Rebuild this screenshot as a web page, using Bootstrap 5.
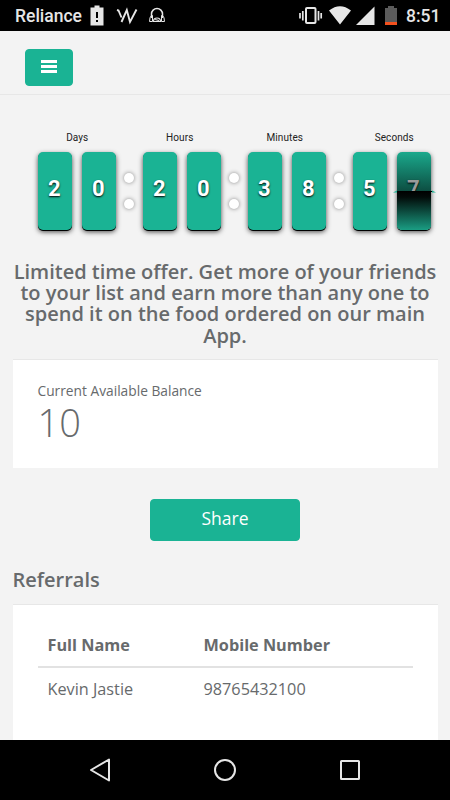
<!DOCTYPE html>
<html lang="en">
<head>
<meta charset="utf-8">
<meta name="viewport" content="width=device-width, initial-scale=1">
<title>Referrals</title>
<link href="https://cdn.jsdelivr.net/npm/bootstrap@5.3.0/dist/css/bootstrap.min.css" rel="stylesheet">
<style>
body{font-family:"Open Sans","Noto Sans",sans-serif;background:#f3f3f3;color:#676a6c;width:450px;height:800px;line-height:1.43}
.statusbar{height:31px;background:#000;color:#e6e6e6;font:500 17.5px/33px Roboto,sans-serif}
.statusbar span{white-space:nowrap;padding-top:2px}
.carrier{width:90px;padding-left:15px}
.topnav{height:64px;border-bottom:1px solid #e7e7e7;padding:18px 25px 0}
.btn-teal{--bs-btn-color:#fff;--bs-btn-bg:#1ab394;--bs-btn-border-color:#1ab394;--bs-btn-hover-color:#fff;--bs-btn-hover-bg:#18a689;--bs-btn-border-radius:4px}
.menu-btn{width:47.5px;height:37px}
.clock{height:166px;padding:37px 0 0 37.5px;font-family:Roboto,sans-serif}
.unit{width:78.5px}
.unit-label{font-size:10px;line-height:12px;height:20px;color:#222;text-align:center;letter-spacing:.1px;margin-left:-4px}
.unit-label.first{margin-left:1px}
.unit-label.last{margin-left:5px}
.digit{width:34.5px;height:78px;border-radius:5px;background:#1ab394;color:#fff;font-size:22px;font-weight:700;line-height:73px;text-align:center;padding-right:1px;text-shadow:0 1px 2px #000;box-shadow:0 1px 0 #000,0 2px 5px rgba(0,0,0,.7)}
.flipping{position:relative;color:#9b9b9b;background:linear-gradient(#1aa98c 0,#0d4e42 39px,#000 39px,#020b09 45px,#1a9d83 78px)}
.flipping svg{position:absolute;left:-4px;top:37px}
.flipping b{position:absolute;left:0;top:39px;width:34.5px;height:39px;border-radius:0 0 5px 5px;background:linear-gradient(#000,#020b09 6px,#1a9d83 39px)}
.colon{width:26.5px;padding-top:40.5px}
.colon i{width:10px;height:10px;border-radius:50%;background:#fff;box-shadow:0 0 4px rgba(0,0,0,.45);margin-bottom:16px}
.title{font-size:20px;line-height:21.45px;font-weight:600;margin:0}
.offer{margin-top:-.5px;margin-bottom:12.5px}
.panel{background:#fff;border-top:1px solid #e7e7e7;margin:0 12.5px}
.balance{height:109px;padding:21.5px 25px 0}
.balance-label{font-size:13.75px;line-height:20px}
.balance-value{font-size:38px;line-height:42px;font-weight:300}
.share-row{padding-top:31px}
.share{width:150px;height:42px;font-size:17.5px;line-height:26px;padding:5px 0 9px}
.referrals{padding:28px 12.5px 13.5px}
.list-panel{height:136px;padding:25px 25px 0}
.people{color:#676a6c;font-size:16.25px;margin:0;--bs-table-color:#676a6c;--bs-table-bg:transparent;table-layout:fixed}
.people .name-col{width:156px}
.people th,.people td{padding:0 10px;border:0}
.people th{font-weight:700;height:37px;vertical-align:top;padding-top:4px;border-bottom:2px solid #e2e2e2}
.people td{height:43px;vertical-align:middle;padding-top:1px}
.navkeys{height:60px;background:#000}
</style>
<script src="https://cdn.jsdelivr.net/npm/bootstrap@5.3.0/dist/js/bootstrap.bundle.min.js"></script>
</head>
<body class="overflow-hidden">
<header class="statusbar d-flex align-items-center">
  <span class="carrier">Reliance</span>
  <svg width="205" height="31" viewBox="90 0 205 31" fill="none" stroke="#e6e6e6">
    <path d="M90.5 7.5h4V5.500h5v2h4v18h-13z" fill="#e6e6e6" stroke="none"/>
    <path d="M97 12v6M97 20v2" stroke="#000" stroke-width="2"/>
    <path d="M117 10l1.500.5 3 7M121.500 22l5.300-12 3.200 12 6.500-12.500" stroke-width="1.900"/>
    <path d="M151.500 18v-4a5.500 5.500 0 0 1 11 0v4" stroke-width="1.500"/>
    <path d="M151.500 15.500q-2 1.500-2 6h3v-6zM162.500 15.500q2 1.500 2 6h-3v-6z" stroke-width="1"/>
    <path d="M153.500 21.500q0-3.500 3.500-3.500t3.500 3.500zM155 19.500l4 1" stroke-width="1.200"/>
  </svg>
  <svg width="111" height="31" viewBox="295 0 111 31" fill="#e6e6e6">
    <rect x="306" y="8" width="9.500" height="15" rx="1" fill="none" stroke="#e6e6e6" stroke-width="2"/>
    <path d="M300 13v5.500M302.800 11v9.500M318.500 11v9.500M321.200 13v5.500" stroke="#e6e6e6" stroke-width="1.700"/>
    <path d="M329 10.500q11-8.500 22 0L340 24.500zM356 25L374.500 6.500V25z"/>
    <path d="M385 8h3V6h6v2h3v14h-12z" fill="#5b5b5b"/><path d="M385 22h12v3h-12z" fill="#f4511e"/>
  </svg>
  <span>8:51</span>
</header>
<nav class="topnav">
  <button class="btn btn-teal menu-btn p-0 d-flex align-items-center justify-content-center" aria-label="Menu">
    <svg width="16" height="15" viewBox="0 0 16 15"><path d="M0 1.500h16M0 6.500h16M0 11.500h16" stroke="#fff" stroke-width="2.800"/></svg>
  </button>
</nav>
<main>
  <section class="clock d-flex">
    <div class="unit"><div class="unit-label first">Days</div><div class="d-flex justify-content-between"><div class="digit">2</div><div class="digit">0</div></div></div>
    <div class="colon d-flex flex-column align-items-center"><i></i><i></i></div>
    <div class="unit"><div class="unit-label">Hours</div><div class="d-flex justify-content-between"><div class="digit">2</div><div class="digit">0</div></div></div>
    <div class="colon d-flex flex-column align-items-center"><i></i><i></i></div>
    <div class="unit"><div class="unit-label">Minutes</div><div class="d-flex justify-content-between"><div class="digit">3</div><div class="digit">8</div></div></div>
    <div class="colon d-flex flex-column align-items-center"><i></i><i></i></div>
    <div class="unit"><div class="unit-label last">Seconds</div><div class="d-flex justify-content-between"><div class="digit">5</div><div class="digit flipping">7<b></b><svg width="43" height="4" viewBox="0 0 43 4"><path d="M0 3.500L4 1.500v2zM43 3.500L39 1.500v2z" fill="#1ab394"/><path d="M4 2.500h35" stroke="#000"/></svg></div></div></div>
  </section>
  <h3 class="title offer text-center">Limited time offer. Get more of your friends<br>to your list and earn more than any one to<br>spend it on the food ordered on our main<br>App.</h3>
  <section class="panel balance">
    <div class="balance-label">Current Available Balance</div>
    <div class="balance-value">10</div>
  </section>
  <div class="share-row text-center"><button class="btn btn-teal share">Share</button></div>
  <h3 class="title referrals">Referrals</h3>
  <section class="panel list-panel">
    <table class="table people">
      <colgroup><col class="name-col"><col></colgroup>
      <thead><tr><th>Full Name</th><th>Mobile Number</th></tr></thead>
      <tbody><tr><td>Kevin Jastie</td><td>98765432100</td></tr></tbody>
    </table>
  </section>
</main>
<footer class="navkeys">
  <svg class="d-block" width="450" height="60" viewBox="0 740 450 60" fill="none" stroke="#e6e6e6" stroke-width="2">
    <path d="M109 759.500v21L91 770z" stroke-linejoin="round"/><circle cx="225" cy="770" r="10"/><rect x="341" y="761" width="18" height="18" rx=".5"/>
  </svg>
</footer>
</body>
</html>
